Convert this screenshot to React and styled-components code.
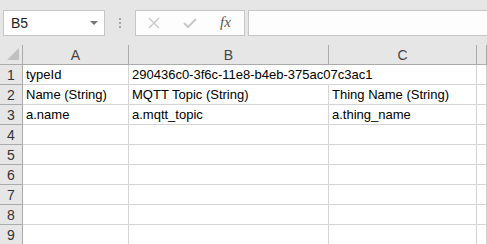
import React from "react";
import styled, { createGlobalStyle } from "styled-components";

const Global = createGlobalStyle`
  body {
    margin: 0;
    background: #e6e6e6;
    font-family: "Liberation Sans", Arial, sans-serif;
    overflow: hidden;
  }
`;

const Page = styled.div`
  width: 487px;
  height: 244px;
  overflow: hidden;
  background: #e6e6e6;
`;

const Toolbar = styled.div`
  display: flex;
  align-items: center;
  height: 45px;
  padding: 0 0 0 3px;
  box-sizing: border-box;
`;

const NameBox = styled.div`
  display: flex;
  align-items: center;
  justify-content: space-between;
  width: 102px;
  height: 26px;
  box-sizing: border-box;
  border: 1px solid #c6c6c6;
  background: #fff;
  padding: 0 6px 0 7px;
  font-size: 14px;
  color: #222;
`;

const Caret = styled.span`
  width: 0;
  height: 0;
  border-left: 4px solid transparent;
  border-right: 4px solid transparent;
  border-top: 4px solid #777;
`;

const Grip = styled.div`
  display: flex;
  flex-direction: column;
  gap: 2px;
  margin: 0 14px 0 14px;
  span {
    width: 2px;
    height: 2px;
    background: #a6a6a6;
  }
`;

const FxButtons = styled.div`
  display: flex;
  align-items: center;
  gap: 23px;
  width: 110px;
  height: 26px;
  box-sizing: border-box;
  border: 1px solid #c6c6c6;
  background: #fdfdfd;
  padding: 0 0 0 12px;
  margin-right: 3px;
`;

const FxText = styled.span`
  font-family: "Liberation Serif", serif;
  font-style: italic;
  font-size: 15px;
  color: #555;
`;

const FormulaInput = styled.div`
  flex: 1;
  height: 26px;
  box-sizing: border-box;
  border: 1px solid #c6c6c6;
  border-right: none;
  background: #fdfdfd;
`;

const Sheet = styled.div`
  display: grid;
  grid-template-columns: 23px 106px 200px 148px 1fr;
  grid-auto-rows: 20px;
  background: #fff;
`;

const ColHead = styled.div`
  display: flex;
  align-items: center;
  justify-content: center;
  background: #e6e6e6;
  border-right: 1px solid #ababab;
  border-bottom: 1px solid #ababab;
  box-sizing: border-box;
  font-size: 14px;
  color: #444;
  position: relative;
`;

const Corner = styled(ColHead)`
  &::after {
    content: "";
    position: absolute;
    right: 3px;
    bottom: 4px;
    width: 0;
    height: 0;
    border-left: 12px solid transparent;
    border-bottom: 12px solid #c0c0c0;
  }
`;

const RowHead = styled.div`
  display: flex;
  align-items: center;
  justify-content: center;
  background: #e6e6e6;
  border-right: 1px solid #ababab;
  border-bottom: 1px solid #ababab;
  box-sizing: border-box;
  font-size: 14px;
  color: #333;
`;

const Cell = styled.div`
  display: flex;
  align-items: center;
  padding-left: 3px;
  border-right: 1px solid #d4d4d4;
  border-bottom: 1px solid #d4d4d4;
  box-sizing: border-box;
  font-size: 13px;
  color: #000;
  white-space: nowrap;
  overflow: visible;
  ${(p) => p.$spill && "border-right-color: transparent;"}
`;

const cols = ["A", "B", "C", ""];
const data = [
  ["typeId", "290436c0-3f6c-11e8-b4eb-375ac07c3ac1", "", ""],
  ["Name (String)", "MQTT Topic (String)", "Thing Name (String)", ""],
  ["a.name", "a.mqtt_topic", "a.thing_name", ""],
];

export default function App() {
  const rows = [];
  for (let r = 0; r < 9; r++) rows.push(data[r] || ["", "", "", ""]);

  return (
    <Page>
      <Global />
      <Toolbar>
        <NameBox>
          B5
          <Caret />
        </NameBox>
        <Grip>
          <span />
          <span />
          <span />
        </Grip>
        <FxButtons>
          <svg width="12" height="12" viewBox="0 0 12 12">
            <path d="M1 1L11 11M11 1L1 11" stroke="#c8c8c8" strokeWidth="1.4" />
          </svg>
          <svg width="14" height="12" viewBox="0 0 14 12">
            <path d="M1 6L5 10L13 2" stroke="#c8c8c8" strokeWidth="2" fill="none" />
          </svg>
          <FxText>fx</FxText>
        </FxButtons>
        <FormulaInput />
      </Toolbar>
      <Sheet>
        <Corner />
        {cols.map((c, i) => (
          <ColHead key={i}>{c}</ColHead>
        ))}
        {rows.map((row, r) => (
          <React.Fragment key={r}>
            <RowHead>{r + 1}</RowHead>
            {row.map((v, c) => (
              <Cell key={c} $spill={r === 0 && c === 1}>
                {v}
              </Cell>
            ))}
          </React.Fragment>
        ))}
      </Sheet>
    </Page>
  );
}
